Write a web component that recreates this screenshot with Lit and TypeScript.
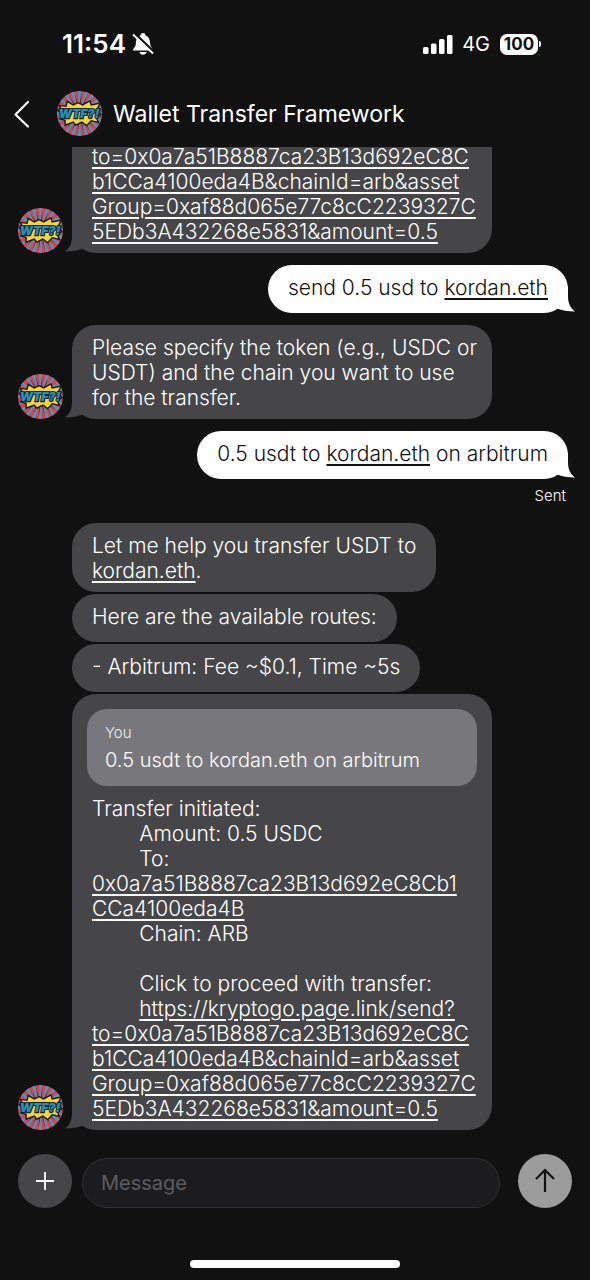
import { LitElement, html, css, svg, nothing } from "lit";
import type { TemplateResult } from "lit";
import { customElement, property } from "lit/decorators.js";

const ray = (angle: number, half: number, inner: number, outer: number) => {
  const rad = Math.PI / 180;
  const pt = (a: number, r: number) =>
    `${(50 + Math.cos(a * rad) * r).toFixed(1)},${(50 + Math.sin(a * rad) * r).toFixed(1)}`;
  return `${pt(angle, inner)} ${pt(angle - half, outer)} ${pt(angle + half, outer)}`;
};

const steps = Array.from({ length: 20 }, (_, i) => i * 18);

@customElement("bot-avatar")
export class BotAvatar extends LitElement {
  static styles = css`
    :host {
      display: block;
      flex: none;
      width: 45px;
      height: 45px;
    }
    .picture {
      display: block;
      width: 100%;
      height: 100%;
      border-radius: 50%;
    }
    .word {
      font: italic 900 27px "Inter", "Liberation Sans", sans-serif;
      fill: #2a90b8;
      stroke: #10243a;
      stroke-width: 5px;
      paint-order: stroke;
    }
  `;

  render() {
    return html`
      <svg class="picture" viewBox="0 0 100 100" role="img" aria-label="Wallet Transfer Framework">
        <rect width="100" height="100" fill="#e0404c"></rect>
        ${steps.map((a) => svg`<polygon points=${ray(a, 4, 0, 75)} fill="#3d9cc4"></polygon>`)}
        ${steps.map((a) => svg`<polygon points=${ray(a + 5, 3.2, 46, 18)} fill="#1a1418"></polygon>`)}
        <polygon
          points="4,32 20,34 23,23 36,31 47,26 57,31 73,22 76,31 96,27 88,43 98,52 87,58 92,70 76,66 66,77 55,69 42,76 36,69 18,76 18,65 6,62 13,52 2,43 10,40"
          fill="#f6d53c"
          stroke="#1a1418"
          stroke-width="3"
        ></polygon>
        <text class="word" x="49" y="59" text-anchor="middle">WTF?!</text>
      </svg>
    `;
  }
}

@customElement("chat-row")
export class ChatRow extends LitElement {
  @property({ type: Boolean, reflect: true }) mine = false;
  @property({ type: Boolean, reflect: true }) tail = false;
  @property({ type: Boolean, reflect: true }) wide = false;
  @property({ type: Boolean, reflect: true }) continued = false;

  static styles = css`
    :host {
      display: flex;
      flex: none;
      align-items: flex-end;
      gap: 9px;
    }
    :host([mine]) {
      justify-content: flex-end;
    }
    .spacer {
      flex: none;
      width: 45px;
    }
    .bubble {
      position: relative;
      isolation: isolate;
      box-sizing: border-box;
      min-height: 48px;
      max-width: 420px;
      padding: 10px 20px 9px;
      border-radius: 24px;
      background: #464648;
      color: #fff;
      font-size: 21px;
      font-weight: 340;
      line-height: 25px;
    }
    :host([mine]) .bubble {
      background: #fff;
      color: #111;
    }
    :host([wide]) .bubble {
      width: 420px;
    }
    :host([continued]) .bubble {
      border-top-left-radius: 0;
      border-top-right-radius: 0;
    }
    .tail {
      position: absolute;
      z-index: -1;
      bottom: 0;
      left: -7px;
      width: 32px;
      height: 26px;
      fill: #464648;
    }
    :host([mine]) .tail {
      left: auto;
      right: -7px;
      fill: #fff;
      transform: scaleX(-1);
    }
  `;

  render() {
    const avatar = this.tail ? html`<bot-avatar></bot-avatar>` : html`<span class="spacer"></span>`;
    return html`
      ${this.mine ? nothing : avatar}
      <div class="bubble">
        ${this.tail
          ? html`<svg class="tail" viewBox="0 0 32 26" aria-hidden="true">
              <path d="M7 0V9C7 16 5 20.500 0 24.500C7 24.500 13 23.500 18 21.500L31 2V0Z"></path>
            </svg>`
          : nothing}
        <slot></slot>
      </div>
    `;
  }
}

@customElement("app-root")
export class AppRoot extends LitElement {
  static styles = css`
    :host {
      display: flex;
      flex-direction: column;
      height: 100vh;
      background: #111;
      color: #fff;
      font-family: "Inter", "Liberation Sans", sans-serif;
    }
    .status {
      display: flex;
      flex: none;
      align-items: center;
      box-sizing: border-box;
      height: 80px;
      padding: 8px 49px 0 62px;
    }
    .time {
      font-size: 26px;
      font-weight: 600;
      line-height: 30px;
    }
    .bell {
      width: 22px;
      height: 24px;
      margin-left: 6px;
    }
    .signal {
      width: 30px;
      height: 20px;
      margin-left: auto;
    }
    .network {
      margin: 0 10px 0 9px;
      font-size: 20px;
      line-height: 24px;
    }
    .battery {
      width: 38px;
      border-radius: 7px;
      background: #fff;
      color: #111;
      font-size: 17px;
      font-weight: 700;
      line-height: 21px;
      text-align: center;
    }
    .nub {
      width: 2px;
      height: 6px;
      margin-left: 1px;
      border-radius: 0 2px 2px 0;
      background: #fff;
    }
    .header {
      display: flex;
      flex: none;
      align-items: center;
      height: 67px;
      padding: 0 12px;
    }
    .back {
      display: flex;
      width: 45px;
      padding: 0;
      border: 0;
      background: none;
    }
    .title {
      margin: 0 0 0 11px;
      font-size: 23px;
      font-weight: 400;
      line-height: 30px;
    }
    .chat {
      display: flex;
      flex: 1;
      flex-direction: column;
      justify-content: flex-end;
      gap: 12px;
      min-height: 0;
      padding: 0 22px 0 18px;
      overflow: hidden;
    }
    .group {
      display: flex;
      flex: none;
      flex-direction: column;
      gap: 2px;
    }
    .sent {
      flex: none;
      margin: -4px 2px 6px;
      font-size: 15px;
      font-weight: 340;
      line-height: 18px;
      text-align: right;
    }
    .link {
      color: inherit;
      text-decoration-thickness: 2px;
      text-underline-offset: 3px;
    }
    .body {
      margin: 0;
      white-space: pre;
    }
    .quote {
      box-sizing: border-box;
      height: 77px;
      margin: 5px -5px 10px;
      padding: 15px 18px 0;
      border-radius: 20px;
      background: #78777c;
    }
    .author {
      margin: 0 0 6px;
      font-size: 15px;
      line-height: 18px;
      color: #eee;
    }
    .quoted {
      margin: 0;
      font-size: 20px;
      line-height: 24px;
    }
    .composer {
      display: flex;
      flex: none;
      align-items: flex-end;
      padding: 24px 18px 0;
    }
    .round {
      display: grid;
      flex: none;
      place-items: center;
      width: 54px;
      height: 54px;
      padding: 0;
      border: 0;
      border-radius: 50%;
      background: #464648;
    }
    .send {
      background: #9c9c9c;
    }
    .field {
      flex: 1;
      box-sizing: border-box;
      min-width: 0;
      height: 50px;
      margin: 0 18px 0 10px;
      padding: 0 18px;
      border: 1px solid #303032;
      border-radius: 25px;
      outline: 0;
      background: #1c1c1e;
      color: #fff;
      font: 20px/25px "Inter", "Liberation Sans", sans-serif;
    }
    .field::placeholder {
      color: #5c5c5f;
      opacity: 1;
    }
    .home {
      display: flex;
      flex: none;
      align-items: flex-end;
      justify-content: center;
      height: 60px;
      padding-bottom: 12px;
    }
    .bar {
      width: 210px;
      height: 8px;
      border-radius: 4px;
      background: #fff;
    }
  `;

  private link(content: string | TemplateResult) {
    return html`<a class="link" href="#transfer">${content}</a>`;
  }

  private transferQuery() {
    return html`to=0x0a7a51B8887ca23B13d692eC8C<br />b1CCa4100eda4B&amp;chainId=arb&amp;asset<br />Group=0xaf88d065e77c8cC2239327C<br />5EDb3A432268e5831&amp;amount=0.5`;
  }

  render() {
    return html`
      <div class="status">
        <span class="time">11:54</span>
        <svg class="bell" viewBox="0 0 22 24" aria-hidden="true">
          <path
            d="M1 18.500C1 16.500 3.500 15.500 3.800 12C4.100 7.500 5 4.500 8.500 3.400C8.800 1.800 9.600 1 11 1S13.200 1.800 13.500 3.400C17 4.500 17.900 7.500 18.200 12C18.500 15.500 21 16.500 21 18.500Z"
            fill="#fff"
          ></path>
          <path d="M7.500 20H14.500C14.200 21.800 12.800 22.800 11 22.800S7.800 21.800 7.500 20Z" fill="#fff"></path>
          <path d="M2.400 1.200L22.400 20.200" stroke="#111" stroke-width="2.400"></path>
          <path d="M1 2.500L21 21.500" stroke="#fff" stroke-width="1.800"></path>
        </svg>
        <svg class="signal" viewBox="0 0 30 20" fill="#fff" aria-hidden="true">
          <rect x="0" y="13" width="5.500" height="7" rx="1.500"></rect>
          <rect x="8" y="9.500" width="5.500" height="10.500" rx="1.500"></rect>
          <rect x="16" y="5" width="5.500" height="15" rx="1.500"></rect>
          <rect x="24" y="1" width="5.500" height="19" rx="1.500"></rect>
        </svg>
        <span class="network">4G</span>
        <span class="battery">100</span>
        <span class="nub"></span>
      </div>

      <header class="header">
        <button class="back" aria-label="Back">
          <svg width="20" height="30" viewBox="0 0 20 30" fill="none" aria-hidden="true">
            <path
              d="M16 3L3.500 15.500L16 27.500"
              stroke="#fff"
              stroke-width="2.200"
              stroke-linecap="round"
              stroke-linejoin="round"
            ></path>
          </svg>
        </button>
        <bot-avatar></bot-avatar>
        <h1 class="title">Wallet Transfer Framework</h1>
      </header>

      <main class="chat">
        <chat-row tail wide continued>
          <p class="body">${this.link(this.transferQuery())}</p>
        </chat-row>
        <chat-row mine tail>send 0.5 usd to ${this.link("kordan.eth")}</chat-row>
        <chat-row tail wide>
          <p class="body">Please specify the token (e.g., USDC or
USDT) and the chain you want to use
for the transfer.</p>
        </chat-row>
        <chat-row mine tail>0.5 usdt to ${this.link("kordan.eth")} on arbitrum</chat-row>
        <p class="sent">Sent</p>
        <div class="group">
          <chat-row>Let me help you transfer USDT to<br />${this.link("kordan.eth")}.</chat-row>
          <chat-row>Here are the available routes:</chat-row>
          <chat-row>- Arbitrum: Fee ~$0.1, Time ~5s</chat-row>
          <chat-row tail wide>
            <div class="quote">
              <p class="author">You</p>
              <p class="quoted">0.5 usdt to kordan.eth on arbitrum</p>
            </div>
            <p class="body">Transfer initiated:
        Amount: 0.5 USDC
        To:
${this.link(html`0x0a7a51B8887ca23B13d692eC8Cb1<br />CCa4100eda4B`)}
        Chain: ARB

        Click to proceed with transfer:
        ${this.link(html`https://kryptogo.page.link/send?<br />${this.transferQuery()}`)}</p>
          </chat-row>
        </div>
      </main>

      <form class="composer" @submit=${(e: Event) => e.preventDefault()}>
        <button class="round" type="button" aria-label="Add attachment">
          <svg width="20" height="20" viewBox="0 0 20 20" aria-hidden="true">
            <path d="M10 1V19M1 10H19" stroke="#fff" stroke-width="1.800"></path>
          </svg>
        </button>
        <input class="field" type="text" placeholder="Message" aria-label="Message" />
        <button class="round send" type="submit" aria-label="Send">
          <svg width="22" height="26" viewBox="0 0 22 26" fill="none" aria-hidden="true">
            <path
              d="M11 24V2M2 11L11 2L20 11"
              stroke="#111"
              stroke-width="2.200"
              stroke-linejoin="round"
            ></path>
          </svg>
        </button>
      </form>
      <div class="home"><span class="bar"></span></div>
    `;
  }
}
